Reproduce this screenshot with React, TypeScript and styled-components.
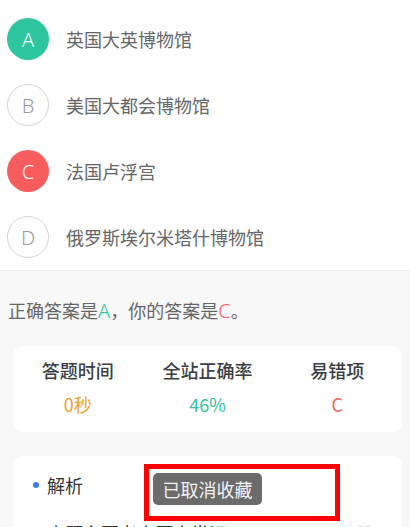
import React from "react";
import styled, { createGlobalStyle } from "styled-components";

const Global = createGlobalStyle`
  html, body { margin: 0; padding: 0; background: #f8f8f8; }
  body { font-family: "Noto Sans CJK SC", "Noto Sans", sans-serif; overflow: hidden; }
  * { box-sizing: border-box; }
`;

const Page = styled.div`
  position: relative;
  width: 410px;
  height: 527px;
  overflow: hidden;
  background: #f8f8f8;
`;

const OptionList = styled.div`
  background: #fff;
  padding-top: 6px;
  border-bottom: 1px solid #ececec;
`;

const OptionRow = styled.div`
  display: flex;
  align-items: center;
  height: 66px;
  padding-left: 7px;
`;

type Kind = "right" | "wrong" | "plain";

const Badge = styled.div<{ $kind: Kind }>`
  width: 42px;
  height: 42px;
  border-radius: 50%;
  display: flex;
  align-items: center;
  justify-content: center;
  font-family: "Noto Sans", sans-serif;
  font-size: 20px;
  font-weight: 300;
  background: ${(p) => (p.$kind === "right" ? "#2dc6a0" : p.$kind === "wrong" ? "#f85c5c" : "#fff")};
  color: ${(p) => (p.$kind === "plain" ? "#999" : "#fff")};
  border: ${(p) => (p.$kind === "plain" ? "1px solid #d4d4d4" : "none")};
`;

const OptionText = styled.span`
  margin-left: 17px;
  font-size: 18px;
  color: #666;
`;

const Summary = styled.div`
  padding: 24px 8px 0;
  height: 75px;
  font-size: 18px;
  color: #666;
  line-height: 30px;
`;

const Mark = styled.span<{ $c: string }>`
  color: ${(p) => p.$c};
  font-family: "Noto Sans", sans-serif;
  font-size: 20px;
  font-weight: 300;
`;

const Card = styled.div`
  margin: 0 8px 0 13px;
  background: #fff;
  border-radius: 9px;
`;

const StatsCard = styled(Card)`
  display: grid;
  grid-template-columns: repeat(3, 1fr);
  height: 86px;
  padding-top: 10px;
`;

const Stat = styled.div`
  display: flex;
  flex-direction: column;
  align-items: center;
`;

const StatLabel = styled.div`
  font-size: 18px;
  font-weight: 500;
  color: #3a3e44;
  line-height: 28px;
`;

const StatValue = styled.div<{ $c: string }>`
  margin-top: 6px;
  font-size: 18px;
  color: ${(p) => p.$c};
  line-height: 28px;
`;

const AnalysisCard = styled(Card)`
  margin-top: 24px;
  padding: 14px 0 0 20px;
  height: 120px;
`;

const AnalysisHead = styled.div`
  display: flex;
  align-items: center;
  height: 30px;
`;

const Dot = styled.span`
  width: 6px;
  height: 6px;
  border-radius: 50%;
  background: #3a7df2;
`;

const HeadText = styled.span`
  margin-left: 8px;
  font-size: 18px;
  color: #333;
`;

const Body = styled.div`
  display: flex;
  justify-content: space-between;
  margin-top: 20px;
  padding-left: 14px;
  padding-right: 30px;
  font-size: 18px;
  color: #333;
`;

const Faint = styled.span`
  color: #ccc;
  font-size: 14px;
`;

const Toast = styled.div`
  position: absolute;
  left: 153px;
  top: 473px;
  width: 109px;
  height: 32px;
  border-radius: 5px;
  background: #6b6b6b;
  color: #f2f2f2;
  font-size: 18px;
  display: flex;
  align-items: center;
  justify-content: center;
`;

const Highlight = styled.div`
  position: absolute;
  left: 144px;
  top: 464px;
  width: 196px;
  height: 57px;
  border: 5px solid #ff0000;
`;

const options: { key: string; text: string; kind: Kind }[] = [
  { key: "A", text: "英国大英博物馆", kind: "right" },
  { key: "B", text: "美国大都会博物馆", kind: "plain" },
  { key: "C", text: "法国卢浮宫", kind: "wrong" },
  { key: "D", text: "俄罗斯埃尔米塔什博物馆", kind: "plain" },
];

export default function App() {
  return (
    <Page>
      <Global />
      <OptionList>
        {options.map((o) => (
          <OptionRow key={o.key}>
            <Badge $kind={o.kind}>{o.key}</Badge>
            <OptionText>{o.text}</OptionText>
          </OptionRow>
        ))}
      </OptionList>
      <Summary>
        正确答案是<Mark $c="#2dc6a0">A</Mark>，你的答案是<Mark $c="#f85c5c">C</Mark>。
      </Summary>
      <StatsCard>
        <Stat>
          <StatLabel>答题时间</StatLabel>
          <StatValue $c="#f0a020">0秒</StatValue>
        </Stat>
        <Stat>
          <StatLabel>全站正确率</StatLabel>
          <StatValue $c="#2dc6a0">46%</StatValue>
        </Stat>
        <Stat>
          <StatLabel>易错项</StatLabel>
          <StatValue $c="#f56060">C</StatValue>
        </Stat>
      </StatsCard>
      <AnalysisCard>
        <AnalysisHead>
          <Dot />
          <HeadText>解析</HeadText>
        </AnalysisHead>
        <Body>
          <span>本题主要考查历史常识</span>
          <Faint>20</Faint>
        </Body>
      </AnalysisCard>
      <Toast>已取消收藏</Toast>
      <Highlight />
    </Page>
  );
}
